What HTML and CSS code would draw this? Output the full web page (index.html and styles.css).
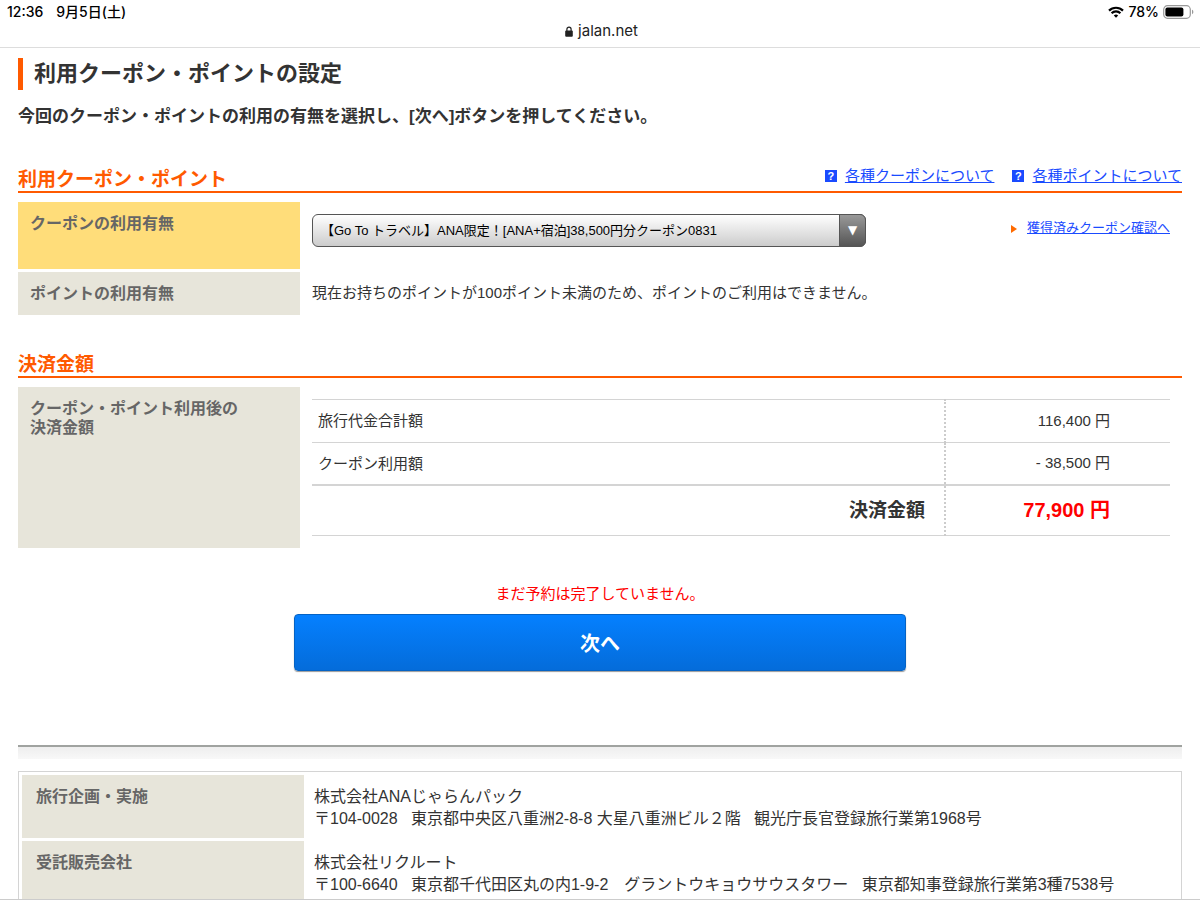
FILE: index.html
```html
<!DOCTYPE html>
<html lang="ja">
<head>
    <meta charset="UTF-8">
    <meta name="viewport" content="width=device-width, initial-scale=1.0">
    <title>利用クーポン・ポイントの設定</title>
    <link rel="stylesheet" href="styles.css">
</head>
<body>
    <header class="browser">
        <div class="status">
            <div class="status-side">
                <span>12:36</span>
                <span>9月5日(土)</span>
            </div>
            <div class="status-side status-right">
                <svg class="wifi" width="16" height="12" viewBox="0 0 16 12" fill="none" stroke="#000" stroke-width="2.2">
                    <path d="M1 4.6a10 10 0 0 1 14 0"/>
                    <path d="M3.6 7.3a6.2 6.2 0 0 1 8.8 0"/>
                    <path d="M8 11.8 5.8 9.5a3.2 3.2 0 0 1 4.4 0z" fill="#000" stroke="none"/>
                </svg>
                <span>78%</span>
                <svg width="31" height="14" viewBox="0 0 31 14">
                    <rect x="0.7" y="0.7" width="26.6" height="12.6" rx="3.8" fill="none" stroke="#999" stroke-width="1.2"/>
                    <rect x="2.4" y="2.4" width="18" height="9.2" rx="2" fill="#000"/>
                    <path d="M29 4.8c1.8.6 1.8 3.8 0 4.4z" fill="#999"/>
                </svg>
            </div>
        </div>
        <div class="address">
            <svg width="8" height="11" viewBox="0 0 8 11">
                <path d="M1.9 5V3.2a2.1 2.1 0 0 1 4.2 0V5" fill="none" stroke="#222" stroke-width="1.2"/>
                <rect x="0.2" y="4.6" width="7.6" height="6.2" rx="1" fill="#222"/>
            </svg>
            <span>jalan.net</span>
        </div>
    </header>

    <main class="page">
        <h1>利用クーポン・ポイントの設定</h1>
        <p class="lead">今回のクーポン・ポイントの利用の有無を選択し、[次へ]ボタンを押してください。</p>

        <form>
            <div class="section-head">
                <h2>利用クーポン・ポイント</h2>
                <ul class="help">
                    <li><span class="q">?</span><a href="#">各種クーポンについて</a></li>
                    <li><span class="q">?</span><a href="#">各種ポイントについて</a></li>
                </ul>
            </div>
            <table class="rows">
                <tr class="row-coupon">
                    <th class="active" scope="row"><label for="coupon">クーポンの利用有無</label></th>
                    <td>
                        <div class="coupon">
                            <div class="select">
                                <select id="coupon" name="coupon">
                                    <option>【Go To トラベル】ANA限定！[ANA+宿泊]38,500円分クーポン0831</option>
                                </select>
                            </div>
                            <a class="arrow-link" href="#">獲得済みクーポン確認へ</a>
                        </div>
                    </td>
                </tr>
                <tr>
                    <th scope="row">ポイントの利用有無</th>
                    <td>現在お持ちのポイントが100ポイント未満のため、ポイントのご利用はできません。</td>
                </tr>
            </table>

            <div class="section-head section-pay">
                <h2>決済金額</h2>
            </div>
            <table class="rows">
                <tr>
                    <th scope="row">クーポン・ポイント利用後の<br>決済金額</th>
                    <td>
                        <table class="amounts">
                            <tr>
                                <th scope="row">旅行代金合計額</th>
                                <td>116,400 円</td>
                            </tr>
                            <tr>
                                <th scope="row">クーポン利用額</th>
                                <td>- 38,500 円</td>
                            </tr>
                            <tr class="total">
                                <th scope="row">決済金額</th>
                                <td>77,900 円</td>
                            </tr>
                        </table>
                    </td>
                </tr>
            </table>

            <div class="submit">
                <p>まだ予約は完了していません。</p>
                <button type="submit">次へ</button>
            </div>
        </form>

        <footer>
            <table class="company">
                <tr>
                    <th scope="row">旅行企画・実施</th>
                    <td>株式会社ANAじゃらんパック<br>〒104-0028 &nbsp; 東京都中央区八重洲2-8-8 大星八重洲ビル２階 &nbsp; 観光庁長官登録旅行業第1968号</td>
                </tr>
                <tr>
                    <th scope="row">受託販売会社</th>
                    <td>株式会社リクルート<br>〒100-6640 &nbsp; 東京都千代田区丸の内1-9-2　グラントウキョウサウスタワー &nbsp; 東京都知事登録旅行業第3種7538号</td>
                </tr>
            </table>
        </footer>
    </main>
</body>
</html>
```

FILE: styles.css
```css
:root {
    --orange: #ff5a00;
    --blue: #1a4bff;
    --beige: #e7e5da;
    --line: #d4d4d4;
    --text: #333;
}

*,
*::before,
*::after {
    box-sizing: border-box;
    margin: 0;
    padding: 0;
}

body {
    display: flex;
    flex-direction: column;
    height: 100vh;
    background: #fff;
    color: var(--text);
    font-family: "Liberation Sans", "Noto Sans CJK JP", sans-serif;
    font-size: 15px;
    line-height: 20px;
}

/* iPad status bar and address */
.browser {
    flex: none;
    height: 48px;
    border-bottom: 1px solid #ddd;
    color: #000;
    font-family: Inter, "Noto Sans CJK JP", sans-serif;
}

.status {
    display: flex;
    justify-content: space-between;
    height: 21px;
    padding: 2px 6px 0 7px;
    font-size: 14px;
    font-weight: 500;
}

.status-side {
    display: flex;
    align-items: center;
    gap: 13px;
}

.status-right {
    gap: 4px;
}

.address {
    display: flex;
    justify-content: center;
    align-items: center;
    gap: 5px;
    height: 20px;
    padding-left: 3px;
    color: #222;
    font-size: 15px;
}

/* page */
.page {
    flex: 1;
    min-height: 0;
    padding: 10px 18px 0;
    overflow-y: auto;
    scrollbar-width: none;
    border-bottom: 1px solid #ccc;
}

h1 {
    border-left: 5px solid var(--orange);
    padding-left: 11px;
    font-size: 22px;
    font-weight: 700;
    line-height: 32px;
}

.lead {
    margin-top: 17px;
    font-size: 17px;
    font-weight: 700;
}

.section-head {
    display: flex;
    justify-content: space-between;
    align-items: flex-start;
    height: 27px;
    margin: 39px 0 9px;
    border-bottom: 2px solid var(--orange);
}

.section-pay {
    margin-top: 36px;
}

h2 {
    color: var(--orange);
    font-size: 19px;
    font-weight: 700;
    line-height: 28px;
}

a {
    color: var(--blue);
}

.help {
    display: flex;
    gap: 18px;
    list-style: none;
}

.help li {
    display: flex;
    align-items: center;
    gap: 8px;
}

.q {
    width: 12px;
    height: 12px;
    background: var(--blue);
    color: #fff;
    font-size: 11px;
    font-weight: 700;
    line-height: 12px;
    text-align: center;
}

.rows,
.company,
.amounts {
    width: 100%;
    border-collapse: collapse;
}

.rows th,
.company th {
    width: 282px;
    background: var(--beige);
    color: #666;
    font-size: 16px;
    font-weight: 700;
    line-height: 19px;
    text-align: left;
    vertical-align: top;
}

.rows > tbody > tr > th,
.rows > tbody > tr > td {
    padding: 12px;
    vertical-align: top;
}

.rows > tbody > tr > td {
    padding-top: 11px;
}

.rows > tbody > tr + tr > th,
.rows > tbody > tr + tr > td {
    border-top: 3px solid #fff;
}

.rows .row-coupon {
    height: 68px;
}

.rows .active {
    background: #ffdd7a;
}

.coupon {
    display: flex;
    justify-content: space-between;
    align-items: flex-start;
    gap: 20px;
}

.select {
    position: relative;
    flex: 0 1 554px;
    margin-top: 1px;
}

.select select {
    display: block;
    width: 100%;
    height: 33px;
    padding: 0 36px 0 8px;
    border: 1px solid #555;
    border-radius: 6px;
    background: linear-gradient(#fff, #ccc);
    color: #000;
    font-family: inherit;
    font-size: 13px;
    appearance: none;
}

/* dark arrow block on top of the select */
.select::after {
    content: "▼";
    position: absolute;
    top: 0;
    right: 0;
    width: 27px;
    height: 33px;
    border: 1px solid #555;
    border-radius: 0 6px 6px 0;
    background: linear-gradient(#999, #555);
    color: #fff;
    font-family: "DejaVu Sans", sans-serif;
    font-size: 12px;
    line-height: 30px;
    text-align: center;
    pointer-events: none;
}

.arrow-link {
    margin-top: 5px;
    font-size: 13px;
}

.arrow-link::before {
    content: "";
    display: inline-block;
    margin-right: 10px;
    border: 4px solid transparent;
    border-left: 6px solid #ff6a00;
    border-right: 0;
    vertical-align: middle;
}

/* amounts */
.amounts {
    margin-top: 1px;
}

.rows .amounts th,
.rows .amounts td {
    height: 43px;
    border-top: 1px solid var(--line);
    border-bottom: 1px solid var(--line);
    padding: 0 6px;
    background: none;
    vertical-align: middle;
}

.rows .amounts th {
    width: auto;
    color: var(--text);
    font-size: 15px;
    font-weight: 400;
}

.rows .amounts td {
    width: 225px;
    border-left: 2px dotted #ccc;
    padding-right: 60px;
    text-align: right;
}

.rows .amounts .total th,
.rows .amounts .total td {
    height: 50px;
    border-top: 2px solid var(--line);
    font-size: 20px;
    font-weight: 700;
}

.rows .amounts .total th {
    padding-right: 19px;
    font-size: 19px;
    text-align: right;
}

.rows .amounts .total td {
    color: #f00;
}

/* submit */
.submit {
    display: flex;
    flex-direction: column;
    align-items: center;
    gap: 10px;
    margin-top: 36px;
    color: #f00;
}

button {
    width: 612px;
    max-width: 100%;
    height: 57px;
    border: 1px solid #0563c4;
    border-radius: 4px;
    background: linear-gradient(#0580ff, #046cda);
    box-shadow: 0 1px 1px #999;
    color: #fff;
    font-family: inherit;
    font-size: 20px;
    font-weight: 700;
    cursor: pointer;
}

footer {
    margin-top: 74px;
    border-top: 2px solid #a0a3a0;
}

footer::before {
    content: "";
    display: block;
    height: 12px;
    margin-bottom: 12px;
    background: linear-gradient(#eee, #f8f8f8);
}

.company {
    border: 1px solid var(--line);
    border-collapse: separate;
    border-spacing: 3px;
    font-size: 16px;
    line-height: 22px;
}

.company th {
    padding: 12px 14px;
}

.company td {
    height: 63px;
    padding: 11px 7px 8px;
    vertical-align: top;
}
```
